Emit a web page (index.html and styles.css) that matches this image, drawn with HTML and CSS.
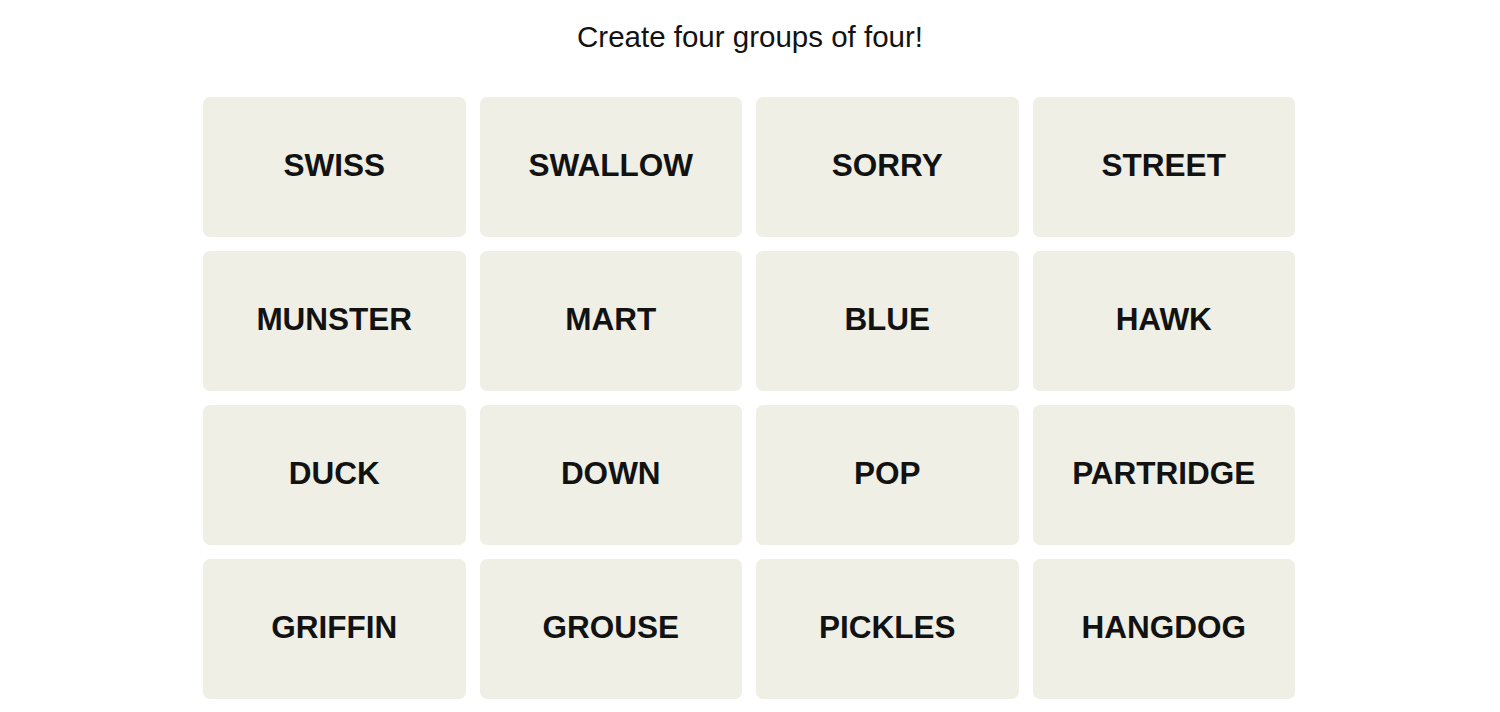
FILE: index.html
```html
<!DOCTYPE html>
<html lang="en">
<head>
<meta charset="utf-8">
<title>Connections</title>
<link rel="stylesheet" href="styles.css">
</head>
<body>
<main class="game">
  <p class="prompt">Create four groups of four!</p>
  <div class="board">
    <button class="tile">SWISS</button>
    <button class="tile">SWALLOW</button>
    <button class="tile">SORRY</button>
    <button class="tile">STREET</button>
    <button class="tile">MUNSTER</button>
    <button class="tile">MART</button>
    <button class="tile">BLUE</button>
    <button class="tile">HAWK</button>
    <button class="tile">DUCK</button>
    <button class="tile">DOWN</button>
    <button class="tile">POP</button>
    <button class="tile">PARTRIDGE</button>
    <button class="tile">GRIFFIN</button>
    <button class="tile">GROUSE</button>
    <button class="tile">PICKLES</button>
    <button class="tile">HANGDOG</button>
  </div>
</main>
</body>
</html>
```
FILE: styles.css
```css
html, body {
  margin: 0;
  padding: 0;
  background: #ffffff;
}
body {
  font-family: "Liberation Sans", Arial, sans-serif;
  color: #121212;
}
.game {
  display: flex;
  flex-direction: column;
  align-items: center;
}
.prompt {
  margin: 0;
  padding-top: 19px;
  height: 97px;
  box-sizing: border-box;
  font-size: 29.5px;
  line-height: 36px;
  font-weight: 400;
  text-align: center;
}
.board {
  display: grid;
  grid-template-columns: repeat(4, 262.5px);
  grid-auto-rows: 140px;
  gap: 14px;
  margin-left: -2px;
}
.tile {
  border: none;
  border-radius: 7px;
  background: #efefe6;
  color: #121212;
  font-family: "Liberation Sans", Arial, sans-serif;
  font-weight: 700;
  font-size: 31.5px;
  padding: 0 0 4px 0;
  display: flex;
  align-items: center;
  justify-content: center;
}
```
